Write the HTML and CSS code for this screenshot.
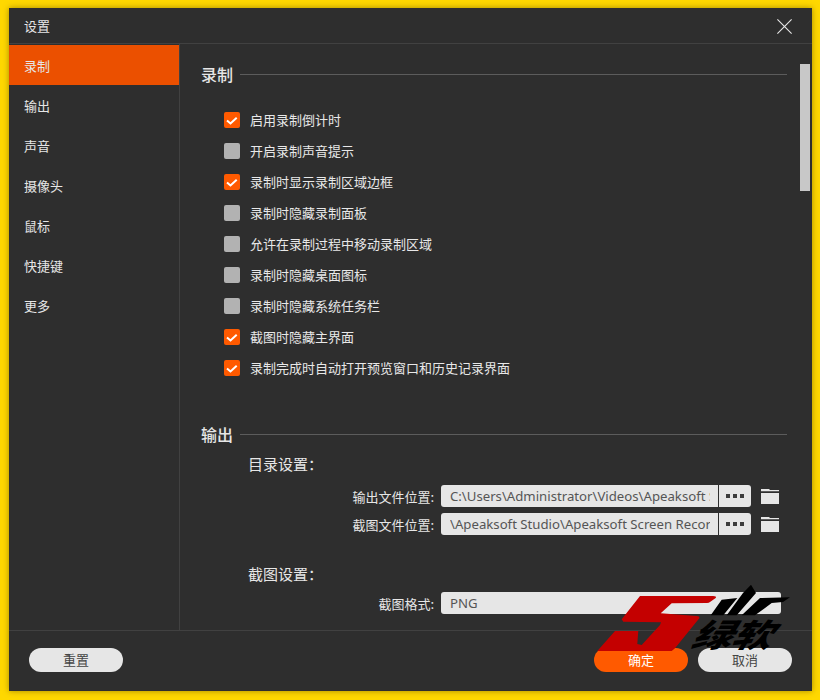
FILE: index.html
```html
<!DOCTYPE html>
<html lang="zh-CN">
<head>
<meta charset="utf-8">
<title>设置</title>
<link rel="stylesheet" href="styles.css">
</head>
<body>
<div class="window">
  <header class="titlebar">
    <span class="title">设置</span>
    <svg class="close" width="15" height="15" viewBox="0 0 15 15"><path d="M.4.4l14.200 14.200M14.600.4L.4 14.600" stroke="#e6e6e6" stroke-width="1.1" fill="none"/></svg>
  </header>
  <div class="body">
    <nav class="sidebar">
      <div class="nav-item active">录制</div>
      <div class="nav-item">输出</div>
      <div class="nav-item">声音</div>
      <div class="nav-item">摄像头</div>
      <div class="nav-item">鼠标</div>
      <div class="nav-item">快捷键</div>
      <div class="nav-item">更多</div>
    </nav>
    <main class="content">
      <div class="section-head"><h2>录制</h2><span class="rule"></span></div>
      <div class="checks">
        <label class="check"><span class="box on"><svg width="16" height="16" viewBox="0 0 16 16"><path d="M3 8.500l3.500 3 6.200-5.800" stroke="#fff" stroke-width="2" fill="none"/></svg></span>启用录制倒计时</label>
        <label class="check"><span class="box"></span>开启录制声音提示</label>
        <label class="check"><span class="box on"><svg width="16" height="16" viewBox="0 0 16 16"><path d="M3 8.500l3.500 3 6.200-5.800" stroke="#fff" stroke-width="2" fill="none"/></svg></span>录制时显示录制区域边框</label>
        <label class="check"><span class="box"></span>录制时隐藏录制面板</label>
        <label class="check"><span class="box"></span>允许在录制过程中移动录制区域</label>
        <label class="check"><span class="box"></span>录制时隐藏桌面图标</label>
        <label class="check"><span class="box"></span>录制时隐藏系统任务栏</label>
        <label class="check"><span class="box on"><svg width="16" height="16" viewBox="0 0 16 16"><path d="M3 8.500l3.500 3 6.200-5.800" stroke="#fff" stroke-width="2" fill="none"/></svg></span>截图时隐藏主界面</label>
        <label class="check"><span class="box on"><svg width="16" height="16" viewBox="0 0 16 16"><path d="M3 8.500l3.500 3 6.200-5.800" stroke="#fff" stroke-width="2" fill="none"/></svg></span>录制完成时自动打开预览窗口和历史记录界面</label>
      </div>
      <div class="section-head second"><h2>输出</h2><span class="rule"></span></div>
      <h3 class="sub first">目录设置：</h3>
      <div class="field">
        <span class="field-label">输出文件位置:</span>
        <div class="path"><span class="path-text">C:\Users\Administrator\Videos\Apeaksoft Studio</span></div>
        <div class="more"><i></i><i></i><i></i></div>
        <svg class="folder" width="18" height="15" viewBox="0 0 18 15"><path d="M0 0h8l1 1h9v1.200H0zM0 4h18v11H0z" fill="#e6e6e6"/></svg>
      </div>
      <div class="field">
        <span class="field-label">截图文件位置:</span>
        <div class="path"><span class="path-text">\Apeaksoft Studio\Apeaksoft Screen Recorder\Snapshot</span></div>
        <div class="more"><i></i><i></i><i></i></div>
        <svg class="folder" width="18" height="15" viewBox="0 0 18 15"><path d="M0 0h8l1 1h9v1.200H0zM0 4h18v11H0z" fill="#e6e6e6"/></svg>
      </div>
      <h3 class="sub shot">截图设置：</h3>
      <div class="field">
        <span class="field-label">截图格式:</span>
        <div class="select">PNG</div>
      </div>
    </main>
    <div class="scrolltrack"><div class="thumb"></div></div>
  </div>
  <footer class="footer">
    <button class="btn light">重置</button>
    <div class="footer-right">
      <button class="btn primary">确定</button>
      <button class="btn light">取消</button>
    </div>
  </footer>
</div>
<div class="watermark">
  <svg width="210" height="75" viewBox="0 0 210 75">
    <path d="M50 16H123Q127 16 125.700 18L120 22Q119 23 117 23L81.700 23.300L70.700 33.300L106.700 36Q110 36 109.300 38.300L85 68.300L81.700 71H7.300L25 51H48.300L47.300 64L51.700 65L70 45L71 42.300L33.300 41.700L31.700 39.300Z" fill="#c40000"/>
    <path d="M120.700 35.300H133.300L147.300 18L131.700 19.700ZM136.700 35.300H146.700L166 13L161 4.700L153 13ZM151.700 35.300H165L181.700 23L193 22L200 17.300L170 18Z" fill="#000"/>
  </svg>
  <span class="wm-text">绿软</span>
</div>
</body>
</html>
```
FILE: styles.css
```css
* { box-sizing: border-box; }
html, body { margin: 0; height: 100%; }
body {
  width: 820px;
  height: 700px;
  padding: 8px 8px 9px 9px;
  background: #ffd800;
  overflow: hidden;
  position: relative;
  font-family: "Noto Sans CJK SC", "Noto Sans", sans-serif;
}
.window {
  width: 803px;
  height: 683px;
  background: #2e2e2e;
  box-shadow: 0 0 6px rgba(90, 70, 0, .55);
  display: flex;
  flex-direction: column;
  color: #e6e6e6;
}
.titlebar {
  height: 36px;
  flex: none;
  border-bottom: 1px solid #414141;
  display: flex;
  align-items: center;
  justify-content: space-between;
  padding: 0 20px 0 15px;
  font-size: 13px;
}
.close { display: block; margin-top: 1px; }
.body {
  flex: 1;
  min-height: 0;
  display: flex;
  overflow: hidden;
  border-bottom: 1px solid #414141;
}
.sidebar {
  width: 171px;
  flex: none;
  border-right: 1px solid #414141;
  padding-top: 1px;
}
.nav-item {
  height: 40px;
  line-height: 41px;
  padding-left: 15px;
  font-size: 13px;
}
.nav-item.active { background: #eb5000; }
.content {
  flex: 1;
  min-width: 0;
  padding: 19px 0 0 21px;
  overflow: hidden;
}
.section-head {
  display: flex;
  align-items: center;
  height: 22px;
}
.section-head h2 {
  margin: 0 7px 0 0;
  font-size: 16px;
  font-weight: 500;
  line-height: 22px;
}
.rule {
  width: 547px;
  height: 1px;
  background: #5c5c5c;
}
.checks {
  margin: 19px 0 0 23px;
}
.check {
  height: 31px;
  display: flex;
  align-items: center;
  font-size: 13px;
  color: #e8e8e8;
}
.box {
  width: 16px;
  height: 16px;
  border-radius: 2px;
  background: #b2b2b2;
  margin-right: 10px;
  flex: none;
}
.box.on { background: #ff5a00; }
.box svg { display: block; }
.second { margin-top: 40px; }
.sub {
  margin: 0 0 0 47px;
  font-size: 15px;
  font-weight: 400;
  line-height: 22px;
  color: #e6e6e6;
}
.sub.first { margin-top: 8px; }
.sub.shot { margin-top: 28px; }
.field {
  display: flex;
  align-items: center;
  height: 22px;
  margin-top: 6px;
}
.sub.first + .field { margin-top: 10px; }
.sub.shot + .field { margin-top: 7px; }
.field-label {
  width: 233px;
  flex: none;
  margin-right: 7px;
  text-align: right;
  font-size: 13px;
  white-space: nowrap;
}
.path {
  width: 277px;
  height: 22px;
  flex: none;
  background: #e6e6e6;
  border-radius: 3px 0 0 3px;
  padding: 0 8px 0 9px;
  overflow: hidden;
}
.path-text, .select {
  font-family: "Noto Sans", "Open Sans", sans-serif;
  font-size: 13.2px;
  line-height: 22px;
  color: #555;
  white-space: nowrap;
}
.path-text { display: block; overflow: hidden; }
.more {
  width: 32px;
  height: 22px;
  flex: none;
  margin-left: 1px;
  background: #e6e6e6;
  border-radius: 0 3px 3px 0;
  display: flex;
  align-items: center;
  justify-content: center;
  gap: 3px;
}
.more i {
  width: 4px;
  height: 4px;
  background: #3c3c3c;
}
.folder {
  display: block;
  margin: 1px 0 0 10px;
  flex: none;
}
.select {
  width: 340px;
  height: 22px;
  flex: none;
  background: #e6e6e6;
  border-radius: 3px;
  padding-left: 9px;
}
.scrolltrack {
  width: 12px;
  flex: none;
  padding: 20px 2px 0 0;
}
.thumb {
  width: 10px;
  height: 127px;
  background: #c8c8c8;
}
.footer {
  height: 60px;
  flex: none;
  display: flex;
  align-items: center;
  justify-content: space-between;
  padding: 0 20px 3px;
}
.footer-right { display: flex; gap: 10px; }
.btn {
  width: 94px;
  height: 24px;
  border: 0;
  border-radius: 12px;
  font-family: inherit;
  font-size: 13px;
  line-height: 24px;
  padding: 0;
}
.btn.light { background: #e6e6e6; color: #444; }
.btn.primary { background: #ff5a00; color: #fff; }
.watermark {
  position: absolute;
  left: 590px;
  top: 580px;
  width: 210px;
  height: 75px;
  pointer-events: none;
}
.watermark svg { display: block; overflow: visible; }
.wm-text {
  position: absolute;
  left: 116px;
  top: 33px;
  font-size: 32px;
  line-height: 40px;
  font-weight: 900;
  color: #000;
  transform: scaleX(1.25) skewX(-25deg);
  white-space: nowrap;
}
```
